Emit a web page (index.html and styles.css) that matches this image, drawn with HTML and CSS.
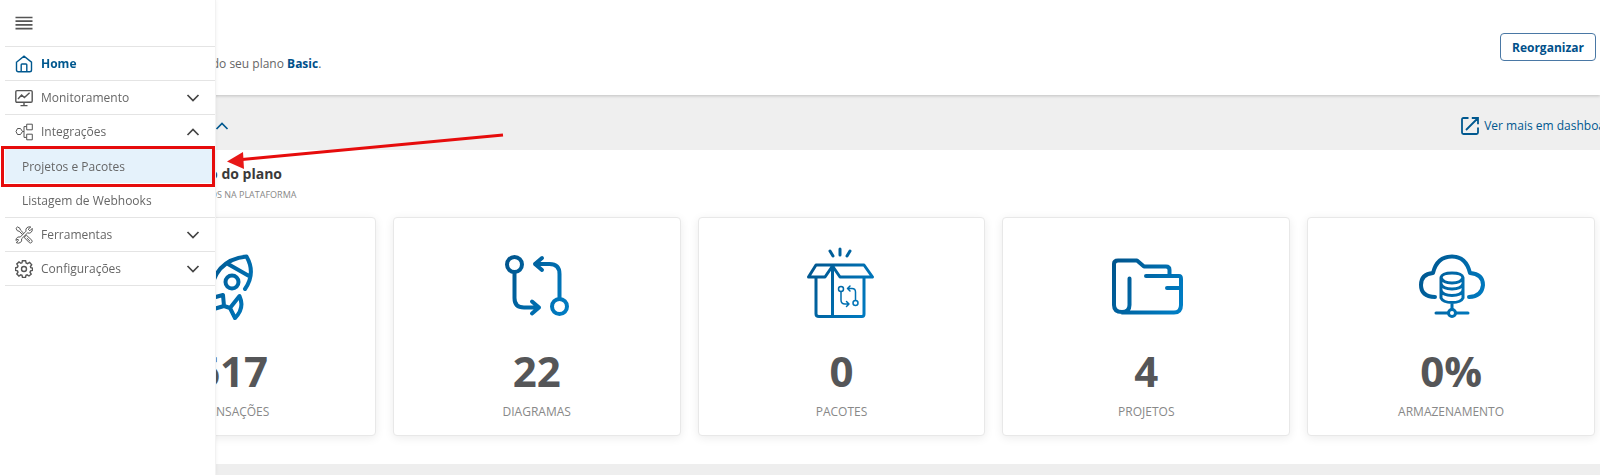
FILE: index.html
```
<!DOCTYPE html>
<html lang="pt-BR">
<head>
  <meta charset="UTF-8">
  <meta name="viewport" content="width=device-width, initial-scale=1.0">
  <title>Home</title>
  <link rel="stylesheet" href="styles.css">
</head>
<body>

<svg class="defs" width="0" height="0" aria-hidden="true">
  <defs>
    <linearGradient id="blue" gradientUnits="userSpaceOnUse" x1="0" y1="20" x2="80" y2="60">
      <stop offset="0" stop-color="#005289"/>
      <stop offset="1" stop-color="#0080c8"/>
    </linearGradient>
    <symbol id="chevron" viewBox="0 0 14 8">
      <path d="M1.5 1 L7 6.5 L12.5 1" fill="none" stroke="currentColor" stroke-width="1.7"/>
    </symbol>
  </defs>
</svg>

<nav class="sidebar" aria-label="Menu">
  <button class="menu-toggle" type="button" aria-label="Abrir menu">
    <svg width="18" height="14" viewBox="0 0 18 14"><path d="M0.5 1.5H17.5M0.5 5.2H17.5M0.5 8.9H17.5M0.5 12.6H17.5" stroke="#555" stroke-width="1.7"/></svg>
  </button>
  <ul class="menu">
    <li>
      <a class="menu-link active" href="#">
        <svg class="menu-icon" viewBox="0 0 18 18"><path d="M1.5 7.2 L9 1.2 L16.5 7.2 V15 Q16.5 16.8 14.7 16.8 H3.3 Q1.5 16.8 1.5 15 Z M6.2 16.5 V9.8 Q6.2 9 7 9 H11 Q11.8 9 11.8 9.8 V16.5"/></svg>
        <span>Home</span>
      </a>
    </li>
    <li>
      <a class="menu-link" href="#">
        <svg class="menu-icon" viewBox="0 0 18 18"><path d="M2 1.6 H16 Q17.2 1.6 17.2 2.8 V12 Q17.2 13.2 16 13.2 H2 Q0.8 13.2 0.8 12 V2.8 Q0.8 1.6 2 1.6 Z M9 13.2 V16.4 M5.5 16.6 H12.5 M3 10 L6.6 6 L9.4 8.6 L14.6 3.8"/></svg>
        <span>Monitoramento</span>
        <svg class="chevron" viewBox="0 0 14 8"><use href="#chevron"/></svg>
      </a>
    </li>
    <li>
      <a class="menu-link" href="#">
        <svg class="menu-icon thin" viewBox="0 0 18 18"><path d="M1 8.500 L2.500 5.5 H5.5 L7.500 8.500 L5.5 11.5 H2.500 Z M7.500 8.500 H9 M11.5 3.6 H9 V14.4 H11.5 M11.7 1.2 H17.3 V6.8 H11.7 Z M11.7 11.2 H17.3 V16.8 H11.7 Z"/></svg>
        <span>Integrações</span>
        <svg class="chevron up" viewBox="0 0 14 8"><use href="#chevron"/></svg>
      </a>
      <ul class="submenu">
        <li><a class="selected" href="#">Projetos e Pacotes</a></li>
        <li><a href="#">Listagem de Webhooks</a></li>
      </ul>
    </li>
    <li>
      <a class="menu-link" href="#">
        <svg class="menu-icon thin" viewBox="0 0 18 18"><path d="M1 2.4 L2.6 0.9 L5 2.4 L5.4 4 L8.6 7.2 L7.4 8.4 L4.1 5.2 L2.4 4.8 Z M10 10 L11.6 9.4 L16.8 14.2 Q17.6 15.6 16.6 16.5 Q15.6 17.4 14.4 16.7 L9.5 11.8 Z M11.8 12 L15 15.2 M15.8 1 L13.2 3.2 L14.8 4.8 L17.2 2.4 Q17.8 5.2 15.8 6.6 Q14.4 7.6 12.6 6.9 L6.6 12.8 Q7.2 15.2 5.4 16.5 Q3.4 17.8 1.2 16.6 L3.4 14.5 L3 13.2 L0.9 14.4 Q0.9 12 2.8 11.2 Q4 10.6 5.2 11.1 L11 5.2 Q10.4 3 12 1.6 Q13.8 0.4 15.8 1 Z"/></svg>
        <span>Ferramentas</span>
        <svg class="chevron" viewBox="0 0 14 8"><use href="#chevron"/></svg>
      </a>
    </li>
    <li>
      <a class="menu-link" href="#">
        <svg class="menu-icon" viewBox="0 0 18 18"><circle cx="9" cy="9" r="2.5"/><path d="M7.4 0.7 H10.6 L11.1 3 L12.5 3.6 L14.6 2.4 L16.7 4.7 L15.4 6.6 L15.8 7.6 L17.5 8 V10.4 L15.6 10.9 L15 12.2 L16.2 14.2 L14 16 L12.1 14.8 L11 15.3 L10.5 17.4 H7.5 L7 15.3 L5.8 14.8 L3.9 16 L1.8 14 L3 12.2 L2.5 10.9 L0.5 10.4 V7.8 L2.4 7.3 L3 6 L1.8 4 L4 2 L5.8 3.3 L7 2.8 Z"/></svg>
        <span>Configurações</span>
        <svg class="chevron" viewBox="0 0 14 8"><use href="#chevron"/></svg>
      </a>
    </li>
  </ul>
</nav>

<header class="page-header">
  <p>Acompanhe os dados do seu plano <strong>Basic</strong>.</p>
  <button class="btn-outline" type="button">Reorganizar</button>
</header>

<section>
  <div class="section-bar">
    <button class="section-toggle" type="button">
      <span>Visão geral do plano</span>
      <svg class="chevron up" viewBox="0 0 14 8"><use href="#chevron"/></svg>
    </button>
    <a class="more-link" href="#">
      <svg width="18" height="18" viewBox="0 0 18 18"><path d="M7.5 1 H2.5 Q1 1 1 2.5 V15.5 Q1 17 2.5 17 H15.5 Q17 17 17 15.5 V10.5 M5 13 L16.5 1.5 M10.8 1 H17 V7.2" fill="none" stroke="currentColor" stroke-width="1.8"/></svg>
      <span>Ver mais em dashboards</span>
    </a>
  </div>

  <div class="usage">
    <h2>Visão da utilização do plano</h2>
    <p class="subtitle">CONSUMOS DISPONIBILIZADOS NA PLATAFORMA</p>

    <div class="cards">
      <article class="card">
        <svg class="card-icon" viewBox="0 0 80 80">
          <path d="M18 50 Q21 13 54.500 9.500 Q64 26 53 42 M36 17 L57 29 M20 51 L31 48 L32 59 L15 64 M32 59 L38 61 M47.500 49 L38 61 L43 71 Q53 61 47.500 49 Z"/>
          <circle cx="40" cy="35" r="6.500"/>
        </svg>
        <strong class="value">617</strong>
        <span class="label">TRANSAÇÕES</span>
      </article>
      <article class="card">
        <svg class="card-icon" viewBox="0 0 80 80">
          <circle cx="17.500" cy="17.500" r="7.500"/>
          <circle cx="62.500" cy="59.500" r="7.500"/>
          <path d="M17.500 25 V51 Q17.500 60.500 27 60.500 H42 M35 54.500 L42 60.500 L35 66.500 M62.500 52 V27 Q62.500 17 52.500 17 H38 M45 11 L38 17 L45 23"/>
        </svg>
        <strong class="value">22</strong>
        <span class="label">DIAGRAMAS</span>
      </article>
      <article class="card">
        <svg class="card-icon box" viewBox="0 0 80 80">
          <path d="M15 30 V67 Q15 69.500 18 69.500 H61 Q63 69.500 63 67 V30 M31.500 19 V69 M15 18 H63 L71.500 30 H39 L31.500 19 L24 30 H7.500 Z M29 4 L32 9 M39 2 V8 M49 4 L46 9"/>
          <g class="fine">
            <circle cx="40" cy="42" r="2.500"/><circle cx="54.500" cy="56" r="2.500"/>
            <path d="M40 45 V53 Q40 57 44 57 H48 M45.500 54.500 L48 57 L45.500 59.500 M54.500 53 V45 Q54.500 41.500 51 41.500 H46.500 M49 39 L46.500 41.500 L49 44"/>
          </g>
        </svg>
        <strong class="value">0</strong>
        <span class="label">PACOTES</span>
      </article>
      <article class="card">
        <svg class="card-icon" viewBox="0 0 80 80">
          <path d="M23.500 31.500 V58 Q23.500 65 16 65 Q8 65 8 58 V17 Q8 13.500 12 13.500 H31 L38 19.500 H60 Q63.500 19.500 63.500 23 V29 M40 29 H73 Q75 29 75 32 V58 Q75 65.500 68 65.500 H16 M61 41 H75"/>
        </svg>
        <strong class="value">4</strong>
        <span class="label">PROJETOS</span>
      </article>
      <article class="card">
        <svg class="card-icon" viewBox="0 0 80 80">
          <path d="M24 50 Q10 49.500 10 38 Q10 27 22 26 Q26 9.500 41 9.500 Q55 9.500 59 26 Q72 27 72 38 Q71 49.500 58 50"/>
          <path class="medium" d="M30 31 V51 Q32 55.500 41 55.500 T52 51 V31 M30 30.500 Q31 26 41 26 T52 30.500 Q50 36 41 36 T30 30.500 M30 37 Q32 42 41 42 T52 37 M30 43.500 Q32 48.500 41 48.500 T52 43.500 M41 56 V62 M25 66 H37 M45 66 H57"/>
          <circle class="medium" cx="41" cy="66" r="3.500"/>
        </svg>
        <strong class="value">0%</strong>
        <span class="label">ARMAZENAMENTO</span>
      </article>
    </div>
  </div>
</section>

<div class="highlight"></div>
<svg class="arrow" width="284" height="44" viewBox="0 0 284 44" aria-hidden="true">
  <path d="M279 7 L18 31.500" stroke="#e60c0c" stroke-width="3"/>
  <path d="M3 33.500 L19 24 L20 41 Z" fill="#e81818"/>
</svg>

</body>
</html>
```
FILE: styles.css
```
* {
  box-sizing: border-box;
}

body {
  margin: 0;
  min-height: 100vh;
  background: #eee;
  font-family: "Open Sans", sans-serif;
  font-size: 12px;
  color: #666;
  overflow: hidden;
}

a {
  color: inherit;
  text-decoration: none;
}

button {
  font: inherit;
  cursor: pointer;
}

ul {
  list-style: none;
  margin: 0;
  padding: 0;
}

h2,
p {
  margin: 0;
}

.defs {
  position: absolute;
}

/* sidebar, opens over the page */
.sidebar {
  position: fixed;
  top: 0;
  bottom: 0;
  left: 0;
  z-index: 2;
  width: 216px;
  padding-left: 5px;
  background: #fff;
  border-right: 1px solid #f2f2f2;
  box-shadow: 0 0 4px rgba(0, 0, 0, 0.06);
}

.menu-toggle {
  display: flex;
  align-items: center;
  height: 46px;
  padding: 0 10px;
  border: 0;
  background: none;
}

.menu {
  border-top: 1px solid #e4e4e4;
}

.menu > li {
  border-bottom: 1px solid #e4e4e4;
}

.menu-link {
  display: flex;
  align-items: center;
  gap: 8px;
  height: 33px;
  padding: 0 15px 0 10px;
}

.menu-link.active {
  color: #00588f;
  font-weight: 700;
}

.menu-icon {
  width: 18px;
  height: 18px;
  fill: none;
  stroke: #555;
  stroke-width: 1.4;
}

.menu-icon.thin {
  stroke-width: 1;
}

.active .menu-icon {
  stroke: #00588f;
}

.chevron {
  width: 14px;
  height: 8px;
  margin-left: auto;
  color: #444;
}

.chevron.up {
  transform: rotate(180deg);
}

.submenu {
  padding-top: 1px;
}

.submenu a {
  display: flex;
  align-items: center;
  height: 34px;
  padding-left: 17px;
}

.submenu .selected {
  background: #e5f2fb;
}

/* page */
.page-header {
  display: flex;
  justify-content: space-between;
  align-items: flex-start;
  position: relative;
  height: 95px;
  padding: 33px 4px 0 88px;
  background: #fff;
  box-shadow: 0 1px 3px rgba(0, 0, 0, 0.2);
}

.page-header p {
  padding-top: 22px;
}

.page-header strong {
  color: #00508a;
}

.btn-outline {
  height: 28px;
  padding: 0 11px;
  border: 1px solid #4a78a5;
  border-radius: 4px;
  background: #fff;
  color: #00508a;
  font-weight: 700;
}

.section-bar {
  display: flex;
  justify-content: space-between;
  align-items: center;
  height: 55px;
  padding: 6px 0 0 88px;
  background: #efefef;
  color: #00588f;
}

.section-toggle {
  display: flex;
  align-items: center;
  gap: 14px;
  padding: 0;
  border: 0;
  background: none;
  color: inherit;
}

.section-toggle .chevron {
  color: inherit;
}

.more-link {
  display: flex;
  align-items: center;
  gap: 5px;
  margin-right: -23px;
  white-space: nowrap;
}

.usage {
  padding: 14px 5px 28px 88px;
  background: #fff;
}

.usage h2 {
  font-size: 14px;
  line-height: 20px;
  color: #3a3a3a;
}

.subtitle {
  padding-bottom: 12px;
  font-size: 9px;
  line-height: 21px;
  color: #888;
}

.cards {
  display: grid;
  grid-template-columns: repeat(5, 1fr);
  gap: 17px;
}

.card {
  display: flex;
  flex-direction: column;
  align-items: center;
  height: 219px;
  padding-top: 29px;
  border: 1px solid #e8e8e8;
  border-radius: 4px;
  background: #fff;
  box-shadow: 0 2px 10px rgba(0, 0, 0, 0.08);
}

.card-icon {
  width: 80px;
  height: 80px;
  fill: none;
  stroke: url(#blue);
  stroke-width: 4;
  stroke-linecap: round;
  stroke-linejoin: round;
}

.card-icon.box {
  stroke-width: 3;
}

.card-icon .medium {
  stroke-width: 3;
}

.card-icon .fine {
  stroke-width: 1.5;
}

.value {
  padding-top: 14px;
  font-size: 42px;
  line-height: 60px;
  color: #555658;
}

.label {
  font-size: 12px;
  line-height: 22px;
  color: #888;
}

/* callout over the selected entry */
.highlight {
  position: absolute;
  top: 146px;
  left: 1px;
  z-index: 3;
  width: 214px;
  height: 41px;
  border: 3px solid #e60c0c;
}

.arrow {
  position: absolute;
  top: 128px;
  left: 224px;
  z-index: 3;
}
```
